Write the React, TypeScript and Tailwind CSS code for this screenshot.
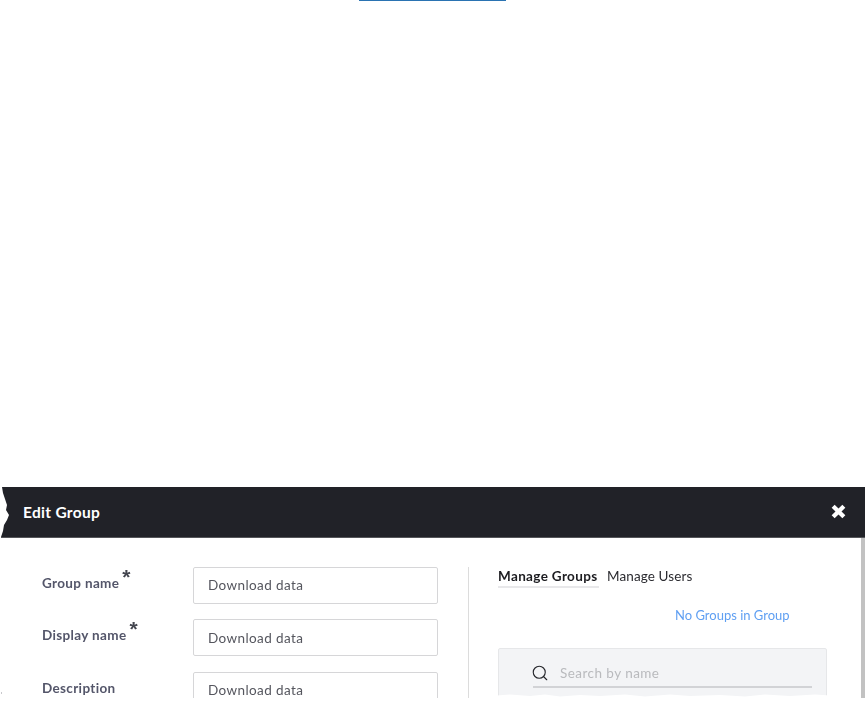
import { Search } from 'lucide-react'

const fields = [
  { label: 'Group name', required: true },
  { label: 'Display name', required: true },
  { label: 'Description', required: false },
]

export default function App() {
  return (
    <div className="h-[702px] overflow-hidden bg-white font-['Lato',sans-serif]">
      <div className="ml-[359px] h-px w-[147px] bg-[#2a73b2]" />

      <div className="relative mt-[486px] blur-[0.4px]">
        <div className="flex h-[51px] items-center justify-between border-b border-[#55565a] bg-[#212228] pl-[23px] pr-[20px] text-white">
          <span className="mt-[2px] text-[15.5px] font-bold tracking-[0.3px]">Edit Group</span>
          <svg width="15" height="15" viewBox="0 0 14 14" className="mb-[2px] mr-[-0.5px]">
            <path d="M3.4 0.6 7 4.2 10.6 0.6 13.4 3.4 9.8 7 13.4 10.6 10.6 13.4 7 9.8 3.4 13.4 0.6 10.6 4.2 7 0.6 3.4Z" fill="#fff" />
          </svg>
        </div>

        {/* torn paper edge of the header */}
        <svg width="10" height="52" viewBox="0 0 10 52" className="absolute left-0 top-0">
          <path d="M0 0H2L3 6 5 12 7 18 6 23 9 28 7 33 4 38 3 44 1 50V52H0Z" fill="#fff" />
        </svg>

        <div className="relative flex h-[160px] overflow-hidden pt-[29px]">
          <div className="w-[468px] shrink-0 pl-[42px] pr-[30px]">
            {fields.map((f) => (
              <div key={f.label} className="mb-[15.4px] flex">
                <div className="w-[151px] shrink-0 pt-[7px] text-[13.5px] font-bold leading-[18px] tracking-[0.35px] text-[#54566a]">
                  <span className="relative">
                    {f.label}
                    {f.required && (
                      <span className="absolute left-full top-[-9px] ml-[3px] font-['Liberation_Sans',sans-serif] text-[21px] leading-none text-[#44464f]">*</span>
                    )}
                  </span>
                </div>
                <div className="flex h-[37px] w-[245px] items-center rounded-[2px] border border-[#d6d6d8] bg-white pl-[14px] text-[13.5px] tracking-[0.4px] text-[#55565e]">
                  Download data
                </div>
              </div>
            ))}
          </div>

          <div className="flex-1 border-l border-[#dcdcdc] pl-[29px]">
            <div className="flex gap-[8px] text-[13.5px] leading-[18px]">
              <span className="w-[101px] border-b-2 border-[#e8e8ea] pb-px font-bold tracking-[0.35px] text-[#1c1c20]">Manage Groups</span>
              <span className="tracking-[0.12px] text-[#2b2b30]">Manage Users</span>
            </div>
            <div className="ml-[177px] mt-[18px] text-[13px] leading-[18px] text-[#5f9ff2]">No Groups in Group</div>
            <div className="mt-[24px] h-[60px] w-[329px] rounded-t-[2px] border border-[#e6e7e9] bg-[#f3f4f6] pl-[34px] pr-[14px] pt-[13px]">
              <div className="flex h-[26px] items-start border-b-2 border-[#d2d3d6]">
                <Search size={18} strokeWidth={1.5} className="ml-[-2px] mt-[2px] text-[#25262b]" />
                <span className="ml-[11px] text-[13.5px] leading-[22px] tracking-[0.45px] text-[#b9babd]">Search by name</span>
              </div>
            </div>
          </div>

          <div className="absolute bottom-0 right-0 top-0 w-[4px] bg-[#c2c2c2]" />

          {/* torn paper edge along the bottom */}
          <svg width="865" height="10" viewBox="0 0 865 10" className="absolute bottom-0 left-0">
            <path d="M490 10V8L510 6.5 530 8 545 6.5 560 8.5 580 7 600 8 625 6.5 645 8.5 670 6.5 690 8 720 7 745 8.5 765 6.5 790 8 815 6.5 830 7.5V10Z" fill="#fff" />
            <path d="M1 7h1v2H1ZM1 49h1v1H1ZM1 92h1v3H1ZM1 108h1v7H1ZM1 133h1v2H1Z" fill="#c8c8cc" transform="translate(0 -3)" />
          </svg>
        </div>
      </div>
    </div>
  )
}
